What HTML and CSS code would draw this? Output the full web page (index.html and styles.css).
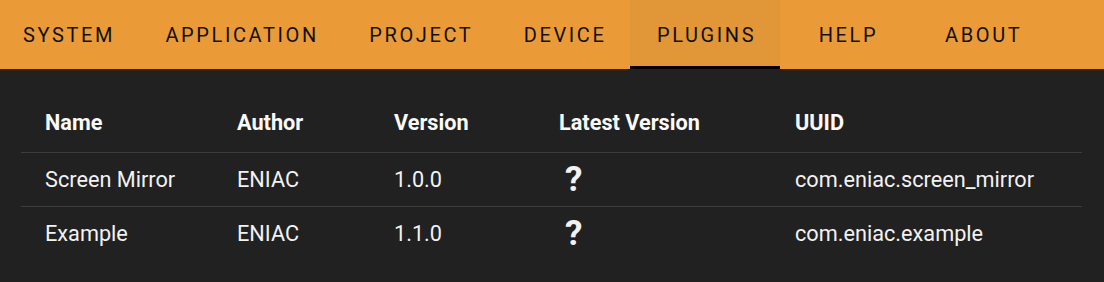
FILE: index.html
```html
<!DOCTYPE html>
<html>
<head>
<meta charset="utf-8">
<link rel="stylesheet" href="styles.css">
</head>
<body>
<nav class="tabs">
  <div class="tab first">System</div>
  <div class="tab">Application</div>
  <div class="tab">Project</div>
  <div class="tab">Device</div>
  <div class="tab active">Plugins</div>
  <div class="tab narrow">Help</div>
  <div class="tab">About</div>
</nav>
<main class="content">
  <div class="table">
    <div class="row head">
      <div class="cell">Name</div>
      <div class="cell">Author</div>
      <div class="cell">Version</div>
      <div class="cell">Latest Version</div>
      <div class="cell">UUID</div>
    </div>
    <div class="row">
      <div class="cell">Screen Mirror</div>
      <div class="cell">ENIAC</div>
      <div class="cell">1.0.0</div>
      <div class="cell"><span class="unknown">?</span></div>
      <div class="cell">com.eniac.screen_mirror</div>
    </div>
    <div class="row">
      <div class="cell">Example</div>
      <div class="cell">ENIAC</div>
      <div class="cell">1.1.0</div>
      <div class="cell"><span class="unknown">?</span></div>
      <div class="cell">com.eniac.example</div>
    </div>
  </div>
</main>
</body>
</html>
```

FILE: styles.css
```css
html, body {
  margin: 0;
  padding: 0;
  background: #212121;
  font-family: Roboto, "Liberation Sans", sans-serif;
}
.tabs {
  display: flex;
  height: 69px;
  background: #ea9b37;
}
.tab {
  display: flex;
  align-items: center;
  padding: 3px 23.5px 0 27px;
  text-transform: uppercase;
  font-size: 20px;
  font-weight: 400;
  letter-spacing: 2.6px;
  color: #111;
  box-sizing: border-box;
  border-bottom: 3px solid transparent;
}
.tab.first {
  padding-left: 23px;
}
.tab.narrow {
  padding-left: 39px;
  padding-right: 40px;
}
.tab.active {
  background: #e19638;
  border-bottom-color: #000;
}
.content {
  padding: 24px 22px 0 21px;
}
.row {
  display: grid;
  grid-template-columns: 192px 157px 165px 236px 1fr;
  height: 53px;
  align-items: center;
  border-bottom: 1px solid #3c3c3c;
  color: #f2f2f2;
  font-size: 21.7px;
}
.row:last-child {
  border-bottom: none;
}
.row.head {
  height: 59px;
  font-weight: 700;
  color: #fafafa;
}
.cell {
  padding-left: 24px;
  white-space: nowrap;
}
.unknown {
  display: inline-block;
  font-size: 35px;
  font-weight: 700;
  margin-left: 6px;
  line-height: 1;
}
```
